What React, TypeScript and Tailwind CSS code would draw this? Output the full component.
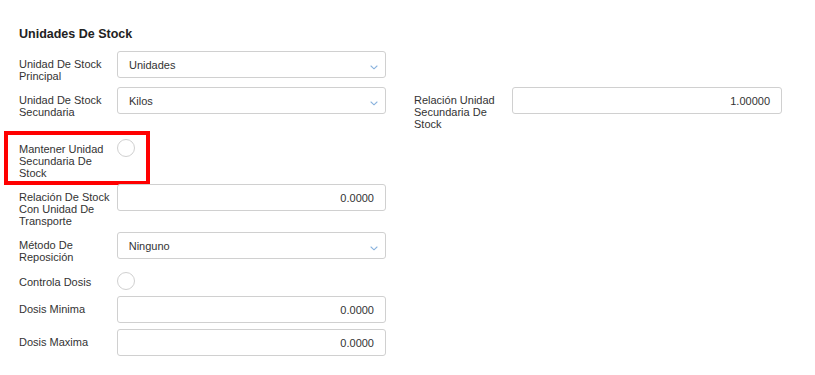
import React from "react";

type Field = {
    label: string;
    kind: "select" | "input" | "check";
    value?: string;
    width?: string;
};

const font = { fontFamily: '"Liberation Sans", Arial, sans-serif' };

function Chevron() {
    return (
        <svg width="8" height="5" viewBox="0 0 8 5" className="absolute right-[7px] top-1/2">
            <path d="M1 1 L4 3.8 L7 1" fill="none" stroke="#8bb4de" strokeWidth="1.1" strokeLinecap="round" />
        </svg>
    );
}

function Control({ f }: { f: Field }) {
    if (f.kind === "check") {
        return <div className="mt-[4px] w-[18px] h-[18px] rounded-full border border-[#d0d0d0] bg-white"></div>;
    }
    if (f.kind === "select") {
        return (
            <div className={`relative ${f.width} h-[27px] border border-[#d0d0d0] rounded-[3px] bg-white flex items-center pl-[11px] pt-px text-[11px] text-[#333]`}>
                {f.value}
                <Chevron />
            </div>
        );
    }
    return (
        <div className={`${f.width} h-[27px] border border-[#d0d0d0] rounded-[3px] bg-white flex items-center justify-end pr-[11px] pt-px text-[11px] text-[#333]`}>
            {f.value}
        </div>
    );
}

function FieldRow({ f, highlight }: { f: Field; highlight?: boolean }) {
    return (
        <div className="relative flex items-start">
            <div className={`w-[98px] pr-[4px] text-[11px] leading-[12px] text-[#333] translate-y-px ${f.kind === "check" ? "pt-[7px]" : "pt-[6px]"}`}>
                {f.label}
            </div>
            <Control f={f} />
            {highlight && (
                <div className="absolute left-[-15px] top-[-4px] w-[146px] h-[54px] border-[4px] border-[#ff0000]"></div>
            )}
        </div>
    );
}

export default function App() {
    const rows: [Field, Field | null][] = [
        [{ label: "Unidad De Stock Principal", kind: "select", value: "Unidades", width: "w-[269px]" }, null],
        [
            { label: "Unidad De Stock Secundaria", kind: "select", value: "Kilos", width: "w-[269px]" },
            { label: "Relación Unidad Secundaria De Stock", kind: "input", value: "1.00000", width: "w-[270px]" },
        ],
        [{ label: "Mantener Unidad Secundaria De Stock", kind: "check" }, null],
        [{ label: "Relación De Stock Con Unidad De Transporte", kind: "input", value: "0.0000", width: "w-[270px]" }, null],
        [{ label: "Método De Reposición", kind: "select", value: "Ninguno", width: "w-[270px]" }, null],
        [{ label: "Controla Dosis", kind: "check" }, null],
        [{ label: "Dosis Minima", kind: "input", value: "0.0000", width: "w-[270px]" }, null],
        [{ label: "Dosis Maxima", kind: "input", value: "0.0000", width: "w-[270px]" }, null],
    ];

    return (
        <div className="w-[815px] h-[375px] bg-white overflow-hidden pt-[27px] pl-[19px]" style={font}>
            <h2 className="text-[12.5px] leading-[15px] font-bold text-[#222] mb-[9px]">Unidades De Stock</h2>
            <div className="grid grid-cols-[367px_368px] gap-x-[28px] gap-y-[6px]">
                {rows.map(([left, right], i) => (
                    <React.Fragment key={i}>
                        <FieldRow f={left} highlight={i === 2} />
                        {right ? <FieldRow f={right} /> : <div></div>}
                    </React.Fragment>
                ))}
            </div>
        </div>
    );
}
